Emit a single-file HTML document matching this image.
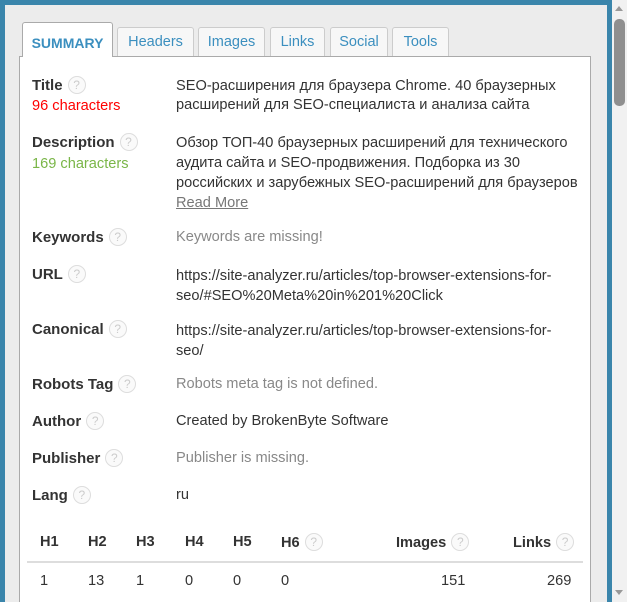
<!DOCTYPE html>
<html><head><meta charset="utf-8"><style>
*{margin:0;padding:0;box-sizing:border-box}
html,body{width:627px;height:602px;overflow:hidden}
body{background:#fff;font-family:"Liberation Sans",sans-serif;position:relative}
.frame{position:absolute;left:0;top:0;width:612px;height:602px;background:#3a85ab}
.inner{position:absolute;left:5px;top:5px;width:602px;height:597px;background:#ececec}
.panel{position:absolute;left:19px;top:56px;width:572px;height:546px;background:#fff;border:1px solid #aaa;border-bottom:none}
.tab{position:absolute;top:27px;height:29px;border:1px solid #ccc;border-bottom:none;border-radius:3px 3px 0 0;background:#f7f7f7;color:#3b8fbf;font-size:14.5px;text-align:center;line-height:28px}
.tab.act{top:22px;height:35px;background:#fff;border-color:#aaa;font-weight:bold;font-size:14px;color:#3b8fbf;line-height:40px;z-index:2}
.t{position:absolute;font-size:14.6px;color:#333;white-space:nowrap}
.l{position:absolute;font-size:15px;font-weight:bold;color:#333;white-space:nowrap}
.q{display:inline-block;width:18px;height:18px;border:1px solid #ddd;border-radius:50%;color:#ccc;font-size:12px;font-weight:normal;text-align:center;line-height:16px;vertical-align:middle;margin-left:5px;background:#fafafa;position:relative;top:-1px}
.g{color:#888}
.sb{position:absolute;left:612px;top:0;width:15px;height:602px;background:#f1f1f1}
.thumb{position:absolute;left:614px;top:19px;width:11px;height:87px;background:#8f8f8f;border-radius:5px}
</style></head><body>
<div class="frame"></div><div class="inner"></div>
<div class="panel"></div>
<div class="tab act" style="left:22px;width:91px">SUMMARY</div>
<div class="tab" style="left:117px;width:77px">Headers</div>
<div class="tab" style="left:198px;width:67px">Images</div>
<div class="tab" style="left:270px;width:55px">Links</div>
<div class="tab" style="left:330px;width:58px">Social</div>
<div class="tab" style="left:392px;width:57px">Tools</div>

<div class="l" style="left:32px;top:77px">Title<span class="q">?</span></div>
<div class="t" style="left:32px;top:98px;color:#f00">96 characters</div>
<div class="t" style="left:176px;top:77px;line-height:19px">SEO-расширения для браузера Chrome. 40 браузерных<br>расширений для SEO-специалиста и анализа сайта</div>

<div class="l" style="left:32px;top:134px">Description<span class="q">?</span></div>
<div class="t" style="left:32px;top:156px;color:#7ab648">169 characters</div>
<div class="t" style="left:176px;top:133px;line-height:20px">Обзор ТОП-40 браузерных расширений для технического<br>аудита сайта и SEO-продвижения. Подборка из 30<br>российских и зарубежных SEO-расширений для браузеров<br><span style="color:#777;text-decoration:underline">Read More</span></div>

<div class="l" style="left:32px;top:229px">Keywords<span class="q">?</span></div>
<div class="t g" style="left:176px;top:229px">Keywords are missing!</div>

<div class="l" style="left:32px;top:266px">URL<span class="q">?</span></div>
<div class="t" style="left:176px;top:266px;line-height:20px">https://site-analyzer.ru/articles/top-browser-extensions-for-<br>seo/#SEO%20Meta%20in%201%20Click</div>

<div class="l" style="left:32px;top:321px">Canonical<span class="q">?</span></div>
<div class="t" style="left:176px;top:321px;line-height:20px">https://site-analyzer.ru/articles/top-browser-extensions-for-<br>seo/</div>

<div class="l" style="left:32px;top:376px">Robots Tag<span class="q">?</span></div>
<div class="t g" style="left:176px;top:376px">Robots meta tag is not defined.</div>

<div class="l" style="left:32px;top:413px">Author<span class="q">?</span></div>
<div class="t" style="left:176px;top:413px">Created by BrokenByte Software</div>

<div class="l" style="left:32px;top:450px">Publisher<span class="q">?</span></div>
<div class="t g" style="left:176px;top:450px">Publisher is missing.</div>

<div class="l" style="left:32px;top:487px">Lang<span class="q">?</span></div>
<div class="t" style="left:176px;top:487px">ru</div>

<div class="t" style="left:40px;top:534px;font-weight:bold">H1</div>
<div class="t" style="left:88px;top:534px;font-weight:bold">H2</div>
<div class="t" style="left:136px;top:534px;font-weight:bold">H3</div>
<div class="t" style="left:185px;top:534px;font-weight:bold">H4</div>
<div class="t" style="left:233px;top:534px;font-weight:bold">H5</div>
<div class="t" style="left:281px;top:534px;font-weight:bold">H6<span class="q">?</span></div>
<div class="t" style="left:396px;top:534px;font-weight:bold">Images<span class="q">?</span></div>
<div class="t" style="left:513px;top:534px;font-weight:bold">Links<span class="q">?</span></div>
<div style="position:absolute;left:27px;top:561px;width:556px;height:2px;background:#ddd"></div>
<div class="t" style="left:40px;top:573px">1</div>
<div class="t" style="left:88px;top:573px">13</div>
<div class="t" style="left:136px;top:573px">1</div>
<div class="t" style="left:185px;top:573px">0</div>
<div class="t" style="left:233px;top:573px">0</div>
<div class="t" style="left:281px;top:573px">0</div>
<div class="t" style="left:441px;top:573px">151</div>
<div class="t" style="left:547px;top:573px">269</div>

<div class="sb"></div><div class="thumb"></div>
<div style="position:absolute;left:615px;top:6px;width:0;height:0;border-left:4px solid transparent;border-right:4px solid transparent;border-bottom:5px solid #999"></div>
<div style="position:absolute;left:615px;top:590px;width:0;height:0;border-left:4px solid transparent;border-right:4px solid transparent;border-top:5px solid #999"></div>
</body></html>
